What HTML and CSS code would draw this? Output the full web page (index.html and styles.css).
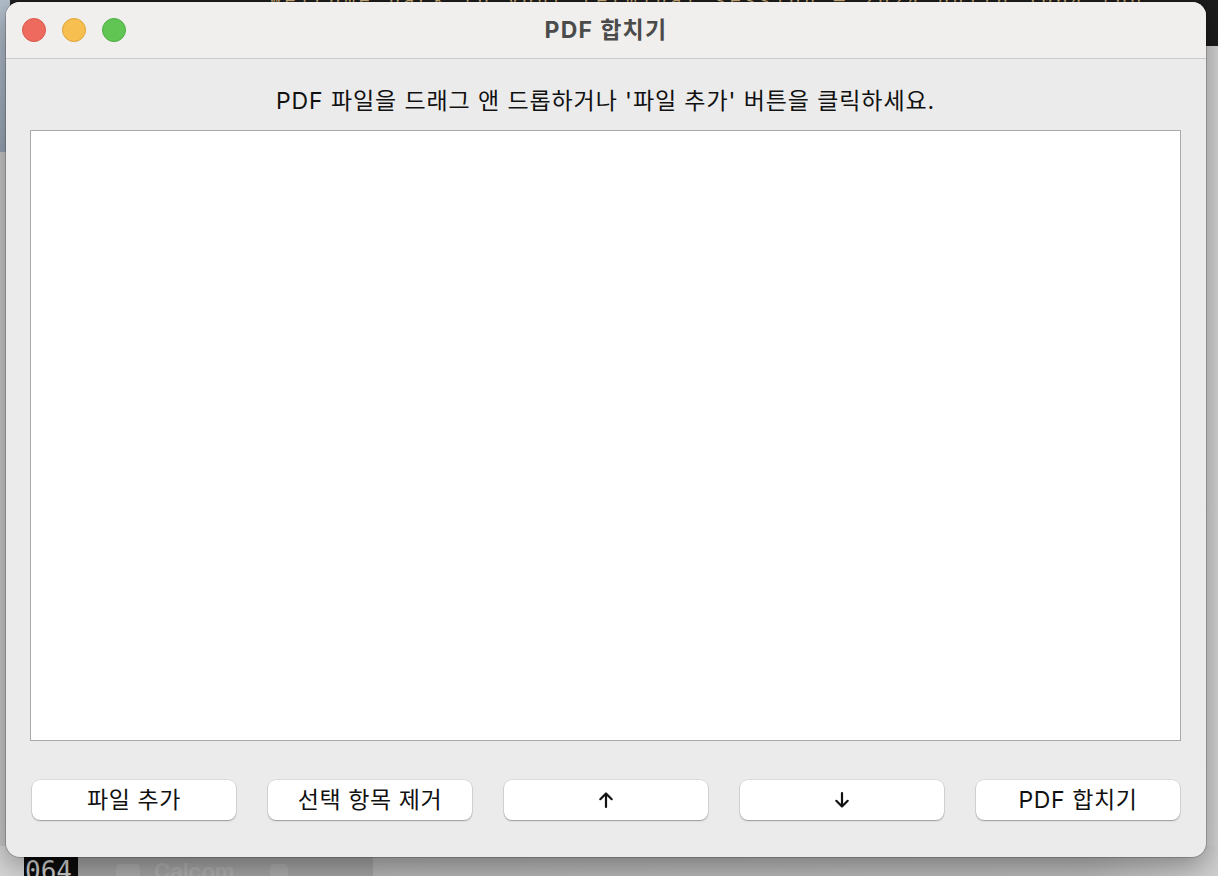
FILE: index.html
```html
<!DOCTYPE html>
<html lang="ko">
<head>
<meta charset="utf-8">
<title>PDF 합치기</title>
<link rel="stylesheet" href="styles.css">
</head>
<body>
<div class="desktop">
  <div class="bg-top"><span class="bg-top-text">Welcome back to your terminal session — 2024 build 1064 log</span></div>
  <div class="bg-right-top"></div>
  <div class="bg-left-top"></div>
  <div class="bg-bottom">
    <span class="bg-dot"></span>
    <span class="term">064</span>
    <span class="finder"><span class="finder-box"></span>Calcom...<span class="finder-box small"></span></span>
    <span class="bg-rest"></span>
  </div>

  <div class="window">
    <div class="titlebar">
      <div class="lights">
        <span class="light red"></span>
        <span class="light yellow"></span>
        <span class="light green"></span>
      </div>
      <div class="title">PDF 합치기</div>
    </div>
    <div class="content">
      <p class="hint">PDF 파일을 드래그 앤 드롭하거나 '파일 추가' 버튼을 클릭하세요.</p>
      <div class="list"></div>
      <div class="buttons">
        <button class="btn">파일 추가</button>
        <button class="btn">선택 항목 제거</button>
        <button class="btn" aria-label="위로"><svg class="arrow-icon" width="18" height="18" viewBox="0 0 18 18"><path d="M9 16V2.5M3.3 8.2L9 2.5l5.7 5.7"/></svg></button>
        <button class="btn" aria-label="아래로"><svg class="arrow-icon" width="18" height="18" viewBox="0 0 18 18"><path d="M9 2v13.5M3.3 9.8L9 15.5l5.7-5.7"/></svg></button>
        <button class="btn">PDF 합치기</button>
      </div>
    </div>
  </div>
</div>
</body>
</html>
```

FILE: styles.css
```css
html, body {
  margin: 0;
  padding: 0;
}

body {
  width: 1218px;
  height: 876px;
  overflow: hidden;
  font-family: Inter, "Noto Sans CJK KR", sans-serif;
}

.desktop {
  position: relative;
  width: 1218px;
  height: 876px;
  background: linear-gradient(90deg, #c6c6c6 0%, #c9c9c9 60%, #d2d2d2 100%);
  padding: 2px 0 0 6px;
  box-sizing: border-box;
}

/* desktop backdrop pieces (under the window) */
.bg-top {
  position: absolute;
  left: 0;
  top: 0;
  width: 1218px;
  height: 12px;
  background: #1f1f1f;
  overflow: hidden;
}

.bg-top-text {
  position: absolute;
  left: 270px;
  top: -11px;
  font-family: "DejaVu Sans Mono", monospace;
  font-size: 18px;
  letter-spacing: 4px;
  color: #c9ab78;
  white-space: nowrap;
}

.bg-right-top {
  position: absolute;
  right: 0;
  top: 0;
  width: 20px;
  height: 46px;
  background: #1c1c1c;
}

.bg-left-top {
  position: absolute;
  left: 0;
  top: 0;
  width: 10px;
  height: 152px;
  background: linear-gradient(180deg, #b4c0cd 0%, #95a3b3 100%);
}

.bg-bottom {
  position: absolute;
  left: 0;
  bottom: 0;
  width: 1218px;
  height: 30px;
  display: flex;
  align-items: flex-end;
}

.bg-dot {
  width: 24px;
  height: 30px;
  background: #d4d4d4;
}

.term {
  width: 54px;
  height: 30px;
  background: #0c0c0c;
  color: #c8c8c8;
  font-family: "DejaVu Sans Mono", monospace;
  font-size: 26px;
  line-height: 50px;
  overflow: hidden;
  text-indent: 1px;
}

.finder {
  width: 295px;
  height: 30px;
  background: #a1a1a1;
  color: #acacac;
  font-family: Inter, sans-serif;
  font-size: 22px;
  font-weight: 600;
  line-height: 50px;
  overflow: hidden;
  display: flex;
  gap: 14px;
  padding-left: 38px;
  box-sizing: border-box;
}

.finder-box {
  width: 24px;
  height: 24px;
  margin-top: 18px;
  border-radius: 4px;
  background: #aaaaaa;
}

.finder-box.small {
  width: 18px;
}

.bg-rest {
  flex: 1;
  height: 30px;
  background: linear-gradient(90deg, #b3b3b3 0%, #b8b8b8 85%, #cfcfcf 100%);
}

/* window */
.window {
  position: relative;
  width: 1200px;
  height: 855px;
  border-radius: 14px;
  overflow: hidden;
  background: #ebebeb;
  box-shadow: 0 0 0 1px rgba(0, 0, 0, 0.18), 0 8px 28px rgba(0, 0, 0, 0.35);
  display: flex;
  flex-direction: column;
}

.titlebar {
  position: relative;
  height: 57px;
  box-sizing: border-box;
  padding-bottom: 5px;
  background: #f0efed;
  border-bottom: 1px solid #c9c9c9;
  display: flex;
  align-items: center;
  justify-content: center;
  flex-shrink: 0;
}

.lights {
  position: absolute;
  left: 16px;
  top: 16px;
  display: flex;
  gap: 16px;
}

.light {
  width: 22px;
  height: 22px;
  border-radius: 50%;
  border: 1px solid;
}

.red {
  background: #ef6a5e;
  border-color: #d8594d;
}

.yellow {
  background: #f6bf4f;
  border-color: #dea43a;
}

.green {
  background: #61c554;
  border-color: #4eae42;
}

.title {
  font-size: 23px;
  font-weight: 700;
  letter-spacing: 1.3px;
  color: #4b4b4b;
}

.content {
  flex: 1;
  display: flex;
  flex-direction: column;
  padding: 27px 25px 0 24px;
}

.hint {
  margin: 0 0 14px;
  height: 30px;
  line-height: 30px;
  text-align: center;
  font-size: 23px;
  letter-spacing: 0.9px;
  color: #111;
}

.list {
  height: 609px;
  background: #fff;
  border: 1px solid #a9a9a9;
  flex-shrink: 0;
}

.buttons {
  margin-top: 39px;
  padding: 0 1px 0 2px;
  display: flex;
  gap: 32px;
}

.btn {
  flex: 1;
  height: 40px;
  border: none;
  border-radius: 8px;
  background: #fff;
  box-shadow: 0 0 0 0.5px rgba(0, 0, 0, 0.12), 0 1px 1.5px rgba(0, 0, 0, 0.3);
  font-family: Inter, "Noto Sans CJK KR", sans-serif;
  font-size: 23px;
  letter-spacing: 0.6px;
  color: #111;
  padding: 0;
  line-height: 40px;
  display: flex;
  align-items: center;
  justify-content: center;
}

.arrow-icon {
  width: 18px;
  height: 18px;
  flex-shrink: 0;
  fill: none;
  stroke: #111;
  stroke-width: 2.2;
  stroke-linecap: round;
  stroke-linejoin: round;
}
```
